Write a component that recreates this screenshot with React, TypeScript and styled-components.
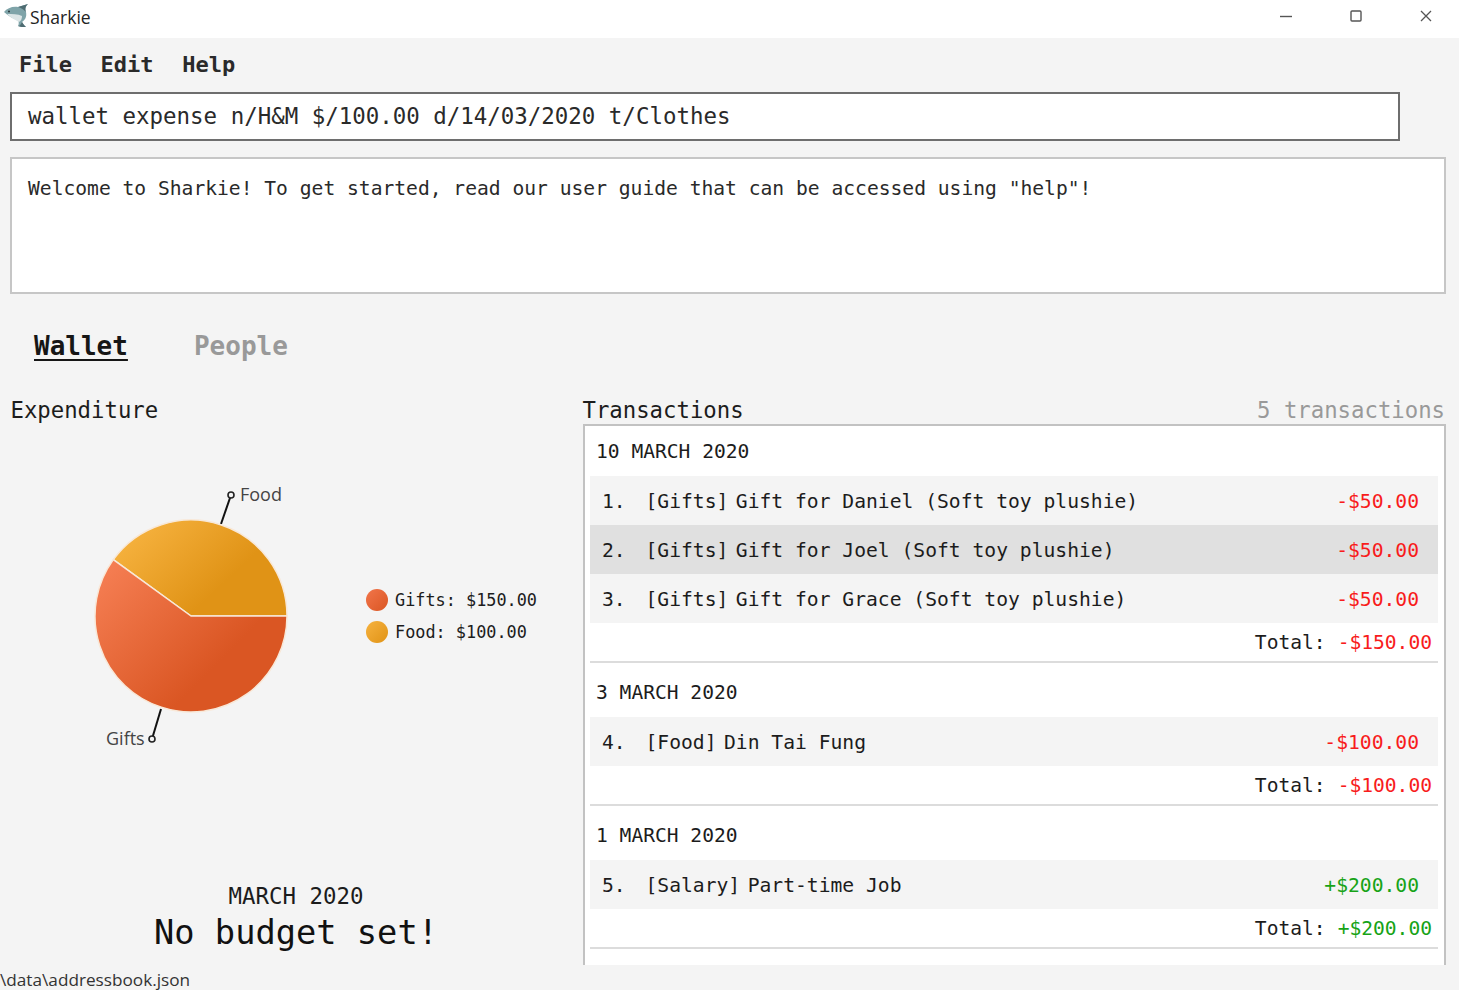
import React from 'react'
import styled, { createGlobalStyle } from 'styled-components'

const MONO = `'DejaVu Sans Mono', 'Liberation Mono', monospace`
const UI = `'Open Sans', 'Noto Sans', sans-serif`

const GlobalStyle = createGlobalStyle`
  html, body {
    margin: 0;
    padding: 0;
    background: #f4f4f4;
    overflow: hidden;
  }
  * {
    box-sizing: border-box;
  }
`

const Window = styled.div`
  width: 1459px;
  height: 990px;
  display: flex;
  flex-direction: column;
  background: #f4f4f4;
  color: #1c1c1c;
  font-family: ${MONO};
`

const TitleBar = styled.header`
  height: 38px;
  flex: none;
  display: flex;
  align-items: center;
  padding: 0 27px 6px 4px;
  background: #fff;
  font-family: ${UI};
  font-size: 17.5px;
  color: #222;
`

const AppName = styled.span`
  margin: 2px auto 0 0;
`

const WindowControls = styled.div`
  display: flex;
  gap: 58px;
  color: #555;
`

const MenuBar = styled.nav`
  height: 54px;
  flex: none;
  display: flex;
  align-items: center;
  gap: 28.6px;
  padding: 0 0 2px 19px;
  font-size: 22px;
  font-weight: 700;
  color: #2a2a2a;
`

const CommandBox = styled.div`
  flex: none;
  width: 1390px;
  height: 49px;
  margin: 0 0 16px 10px;
  padding: 0 0 2px 16px;
  display: flex;
  align-items: center;
  background: #fff;
  border: 2px solid #6e6e6e;
  font-size: 22.44px;
  color: #2a2a2a;
  white-space: pre;
`

const ResultBox = styled.div`
  flex: none;
  width: 1436px;
  height: 137px;
  margin-left: 10px;
  padding: 17px 16px;
  background: #fff;
  border: 2px solid #c6c6c6;
  font-size: 19.64px;
  line-height: 26px;
  color: #2a2a2a;
  white-space: pre;
`

const Tabs = styled.div`
  height: 101px;
  flex: none;
  display: flex;
  align-items: center;
  gap: 66px;
  padding: 3px 0 0 34px;
`

const Tab = styled.span<{ $active?: boolean }>`
  font-size: 26px;
  font-weight: 700;
  color: ${(props) => (props.$active ? '#161616' : '#999')};
  text-decoration: ${(props) => (props.$active ? 'underline' : 'none')};
  text-underline-offset: 4px;
`

const Main = styled.main`
  flex: 1;
  min-height: 0;
  display: flex;
  padding-left: 11px;
`

const LeftColumn = styled.section`
  width: 570px;
  margin-right: 2px;
  flex: none;
  display: flex;
  flex-direction: column;
`

const RightColumn = styled.section`
  width: 863px;
  flex: none;
  display: flex;
  flex-direction: column;
  min-height: 0;
`

const SectionHeader = styled.div`
  height: 29px;
  flex: none;
  display: flex;
  justify-content: space-between;
  align-items: center;
  margin: 0 1px 0 -0.5px;
  padding-top: 1px;
  font-size: 22.3px;
`

const Count = styled.span`
  color: #999;
`

const ChartRow = styled.div`
  display: flex;
  align-items: center;
  padding: 57px 0 0 79px;
`

const ChartSvg = styled.svg`
  width: 210px;
  height: 280px;
  flex: none;
`

const ChartLabel = styled.text`
  font-family: ${UI};
  font-size: 18px;
  fill: #444;
`

const Legend = styled.ul`
  list-style: none;
  margin: 0 0 11px 66px;
  padding: 0;
`

const LegendItem = styled.li`
  height: 32px;
  display: flex;
  align-items: center;
  gap: 7px;
  font-size: 16.85px;
  white-space: pre;
`

const LegendDot = styled.span<{ $from: string; $to: string }>`
  width: 22px;
  height: 22px;
  border-radius: 50%;
  background: linear-gradient(135deg, ${(props) => props.$from}, ${(props) => props.$to});
`

const Budget = styled.div`
  margin-top: auto;
  padding-bottom: 10px;
  text-align: center;
`

const BudgetMonth = styled.div`
  font-size: 22.4px;
  line-height: 30px;
`

const BudgetText = styled.div`
  font-size: 33.7px;
  line-height: 44px;
  color: #111;
`

const TransactionList = styled.div`
  flex: 1;
  min-height: 0;
  overflow: hidden;
  padding: 0 6px 0 5px;
  background: #fff;
  border: 2px solid #c2c2c2;
  border-bottom: none;
`

const DayGroup = styled.div`
  border-bottom: 2px solid #dcdcdc;

  & + & {
    padding-top: 4px;
  }
`

const DayLabel = styled.div`
  height: 50px;
  display: flex;
  align-items: center;
  padding-left: 6px;
  font-size: 19.6px;
`

const Row = styled.div<{ $selected?: boolean }>`
  height: 49px;
  display: flex;
  align-items: center;
  padding: 2px 19px 0 12px;
  background: ${(props) => (props.$selected ? '#e0e0e0' : '#f4f4f4')};
  font-size: 19.66px;
  white-space: pre;
`

const RowIndex = styled.span`
  width: 43.5px;
  flex: none;
`

const RowTag = styled.span`
  margin-right: 7.5px;
`

const RowText = styled.span`
  flex: 1;
`

const Amount = styled.span<{ $income?: boolean }>`
  color: ${(props) => (props.$income ? '#17a317' : '#f81c1c')};
`

const TotalLine = styled.div`
  height: 38px;
  display: flex;
  align-items: center;
  justify-content: flex-end;
  gap: 12px;
  padding-right: 6px;
  font-size: 19.6px;
  white-space: pre;
`

const StatusBar = styled.footer`
  height: 25px;
  flex: none;
  display: flex;
  align-items: center;
  padding-top: 3px;
  font-family: ${UI};
  font-size: 17.2px;
  color: #333;
  white-space: pre;
`

type Transaction = {
  index: number
  tag: string
  text: string
  amount: string
  income?: boolean
  selected?: boolean
}

type Day = {
  date: string
  total: string
  income?: boolean
  items: Transaction[]
}

const days: Day[] = [
  {
    date: '10 MARCH 2020',
    total: '-$150.00',
    items: [
      { index: 1, tag: '[Gifts]', text: 'Gift for Daniel (Soft toy plushie)', amount: '-$50.00' },
      { index: 2, tag: '[Gifts]', text: 'Gift for Joel (Soft toy plushie)', amount: '-$50.00', selected: true },
      { index: 3, tag: '[Gifts]', text: 'Gift for Grace (Soft toy plushie)', amount: '-$50.00' },
    ],
  },
  {
    date: '3 MARCH 2020',
    total: '-$100.00',
    items: [{ index: 4, tag: '[Food]', text: 'Din Tai Fung', amount: '-$100.00' }],
  },
  {
    date: '1 MARCH 2020',
    total: '+$200.00',
    income: true,
    items: [{ index: 5, tag: '[Salary]', text: 'Part-time Job', amount: '+$200.00', income: true }],
  },
]

const SharkIcon: React.FC = () => (
  <svg width="26" height="28" viewBox="0 0 26 28">
    <path d="M0 10 C3 6 9 4 14 5 L24 2 C21 5 21 7 22 10 C23 15 21 18 18 20 C19 22 20 23 22 25 C19 25 16 25 14 24 C15 22 15 20 14 18 C10 17 4 14 0 10 Z" fill="#7fa4a9" />
    <path d="M3 12 C8 12 14 12 18 14 C18 17 17 19 15 20 C11 18 6 15 3 12 Z" fill="#dbe5e6" />
    <path d="M14 5 L24 2 C21 5 21 7 22 10 C19 7 17 6 14 5 Z" fill="#4f6c72" />
    <path d="M18 20 C19 22 20 23 22 25 C19 25 16 25 14 24 C16 24 17 22 18 20 Z" fill="#4f6c72" />
    <circle cx="5" cy="9.5" r="0.9" fill="#1e2b2e" />
  </svg>
)

const MinimizeIcon: React.FC = () => (
  <svg width="12" height="12" viewBox="0 0 12 12">
    <path d="M0 6.5H12" stroke="currentColor" strokeWidth="1.4" />
  </svg>
)

const MaximizeIcon: React.FC = () => (
  <svg width="12" height="12" viewBox="0 0 12 12">
    <rect x="1" y="1" width="10" height="10" rx="1" fill="none" stroke="currentColor" strokeWidth="1.4" />
  </svg>
)

const CloseIcon: React.FC = () => (
  <svg width="12" height="12" viewBox="0 0 12 12">
    <path d="M1 1L11 11M11 1L1 11" stroke="currentColor" strokeWidth="1.3" />
  </svg>
)

const PieChart: React.FC = () => (
  <ChartSvg viewBox="0 0 210 280">
    <defs>
      <linearGradient id="foodFill" gradientUnits="userSpaceOnUse" x1="50" y1="40" x2="120" y2="115">
        <stop offset="0" stopColor="#f6b23f" />
        <stop offset="1" stopColor="#e09316" />
      </linearGradient>
      <linearGradient id="giftsFill" gradientUnits="userSpaceOnUse" x1="15" y1="85" x2="120" y2="190">
        <stop offset="0" stopColor="#f57e53" />
        <stop offset="1" stopColor="#da5623" />
      </linearGradient>
    </defs>
    <path d="M131 43L141 14" stroke="#111" strokeWidth="2" />
    <circle cx="141" cy="14" r="3" fill="#f4f4f4" stroke="#222" strokeWidth="1.6" />
    <ChartLabel x="150" y="20">Food</ChartLabel>
    <path d="M71 228L62 258" stroke="#111" strokeWidth="2" />
    <circle cx="62" cy="258" r="3" fill="#f4f4f4" stroke="#222" strokeWidth="1.6" />
    <ChartLabel x="16" y="264">Gifts</ChartLabel>
    <path d="M101 135L197 135A96 96 0 0 0 23.3 78.6Z" fill="url(#foodFill)" stroke="#f8e8d8" strokeWidth="1.5" />
    <path d="M101 135L23.3 78.6A96 96 0 1 0 197 135Z" fill="url(#giftsFill)" stroke="#f8e8d8" strokeWidth="1.5" />
  </ChartSvg>
)

const App: React.FC = () => {
  return (
    <Window>
      <GlobalStyle />
      <TitleBar>
        <SharkIcon />
        <AppName>Sharkie</AppName>
        <WindowControls>
          <MinimizeIcon />
          <MaximizeIcon />
          <CloseIcon />
        </WindowControls>
      </TitleBar>
      <MenuBar>
        <span>File</span>
        <span>Edit</span>
        <span>Help</span>
      </MenuBar>
      <CommandBox>wallet expense n/H&amp;M $/100.00 d/14/03/2020 t/Clothes</CommandBox>
      <ResultBox>Welcome to Sharkie! To get started, read our user guide that can be accessed using "help"!</ResultBox>
      <Tabs>
        <Tab $active>Wallet</Tab>
        <Tab>People</Tab>
      </Tabs>
      <Main>
        <LeftColumn>
          <SectionHeader>Expenditure</SectionHeader>
          <ChartRow>
            <PieChart />
            <Legend>
              <LegendItem>
                <LegendDot $from="#f2754a" $to="#da5623" />
                Gifts: $150.00
              </LegendItem>
              <LegendItem>
                <LegendDot $from="#f6b23f" $to="#e09316" />
                Food: $100.00
              </LegendItem>
            </Legend>
          </ChartRow>
          <Budget>
            <BudgetMonth>MARCH 2020</BudgetMonth>
            <BudgetText>No budget set!</BudgetText>
          </Budget>
        </LeftColumn>
        <RightColumn>
          <SectionHeader>
            <span>Transactions</span>
            <Count>5 transactions</Count>
          </SectionHeader>
          <TransactionList>
            {days.map((day) => (
              <DayGroup key={day.date}>
                <DayLabel>{day.date}</DayLabel>
                {day.items.map((item) => (
                  <Row key={item.index} $selected={item.selected}>
                    <RowIndex>{item.index}.</RowIndex>
                    <RowTag>{item.tag}</RowTag>
                    <RowText>{item.text}</RowText>
                    <Amount $income={item.income}>{item.amount}</Amount>
                  </Row>
                ))}
                <TotalLine>
                  <span>Total:</span>
                  <Amount $income={day.income}>{day.total}</Amount>
                </TotalLine>
              </DayGroup>
            ))}
          </TransactionList>
        </RightColumn>
      </Main>
      <StatusBar>\data\addressbook.json</StatusBar>
    </Window>
  )
}

export default App
